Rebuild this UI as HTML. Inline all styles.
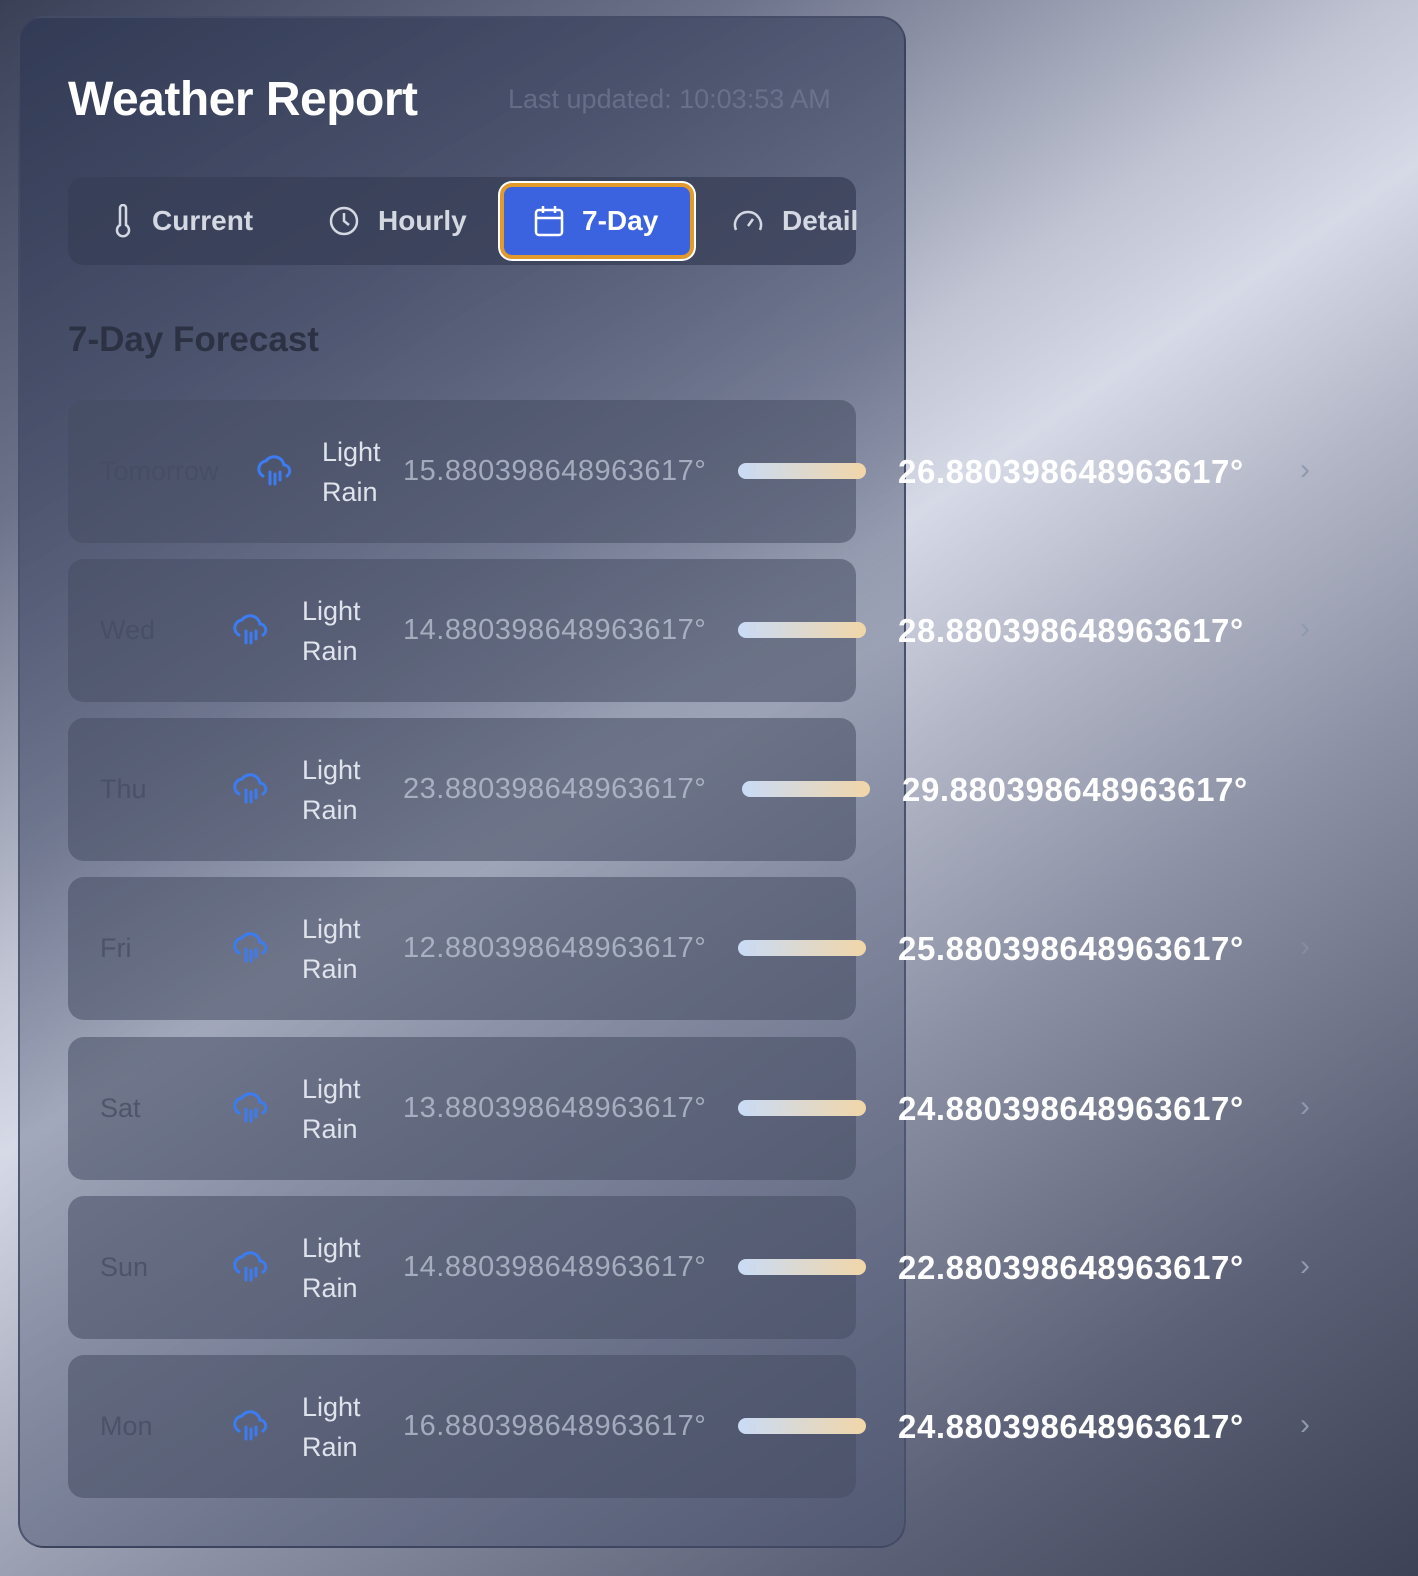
<!DOCTYPE html>
<html><head><meta charset="utf-8"><style>
*{margin:0;padding:0;box-sizing:border-box}
html,body{width:1418px;height:1576px;overflow:hidden}
body{font-family:"Liberation Sans",sans-serif;position:relative;
background:linear-gradient(145deg,#3a4056 0%,#6c728a 20%,#c0c4d3 38%,#d6dae7 45%,#b3b7c7 54%,#8c91a5 66%,#5c6177 84%,#3d4256 100%);}
.card{position:absolute;left:18px;top:16px;width:888px;height:1532px;border-radius:26px;border:2px solid rgba(60,68,95,.7);
background:linear-gradient(150deg,rgba(50,58,85,.95) 0%,rgba(90,98,125,.75) 40%,rgba(120,128,152,.55) 55%,rgba(80,88,115,.75) 100%)}
.title{position:absolute;left:68px;top:72px;font-size:48px;font-weight:bold;color:#fff;letter-spacing:-0.5px}
.upd{position:absolute;left:508px;top:84px;font-size:27px;color:rgba(120,130,155,.6)}
.tabs{position:absolute;left:68px;top:177px;width:788px;height:88px;border-radius:16px;background:rgba(55,62,85,.75)}
.tab{position:absolute;top:0;height:88px;display:flex;align-items:center;font-size:28px;font-weight:bold;color:#d4d8e2}
.tab svg{margin-right:18px}
.active{position:absolute;left:432px;top:6px;width:194px;height:76px;border-radius:12px;background:#3b63e0;border:4px solid #e39a2d;box-shadow:0 0 0 2px #fff}
.h2{position:absolute;left:68px;top:320px;font-size:35px;font-weight:bold;color:#2c3244}
.row{position:absolute;left:68px;width:788px;height:143px;border-radius:16px;background:rgba(70,76,98,.55)}
.t{position:absolute;white-space:nowrap}
.day{font-size:27px;color:rgba(70,76,96,.75)}
.cond{font-size:27px;color:#dfe3ec;line-height:40px}
.lo{font-size:29px;color:rgba(190,198,214,.75);letter-spacing:0.5px}
.hi{font-size:33px;font-weight:bold;color:#fff;letter-spacing:0.6px}
.bar{position:absolute;width:128px;height:16px;border-radius:8px;background:linear-gradient(90deg,#c9dbf6,#f1d6a8)}
.chev{position:absolute;font-size:30px;color:#8f9ab0}
</style></head><body>
<div class="card"></div>
<div class="title">Weather Report</div>
<div class="upd">Last updated: 10:03:53 AM</div>
<div class="tabs">
 <div class="active"></div>
 <div class="tab" style="left:44px"><svg width="22" height="34" viewBox="0 0 22 34" fill="none" stroke="#d4d8e2" stroke-width="2.5"><path d="M8 4a3 3 0 0 1 6 0v17a6 6 0 1 1-6 0z"/></svg>Current</div>
 <div class="tab" style="left:260px"><svg width="32" height="32" viewBox="0 0 32 32" fill="none" stroke="#d4d8e2" stroke-width="2.5"><circle cx="16" cy="16" r="13"/><path d="M16 8v8l5 4"/></svg>Hourly</div>
 <div class="tab" style="left:466px;color:#fff"><svg width="30" height="32" viewBox="0 0 30 32" fill="none" stroke="#fff" stroke-width="2.5"><rect x="2" y="5" width="26" height="25" rx="3"/><path d="M2 13h26M9 1v7M21 1v7"/></svg>7-Day</div>
 <div class="tab" style="left:664px"><svg width="32" height="32" viewBox="0 0 32 32" fill="none" stroke="#d4d8e2" stroke-width="2.5"><path d="M4 25A13 13 0 1 1 28 25"/><path d="M16 21l5-7"/></svg>Detail</div>
</div>
<div class="h2">7-Day Forecast</div>

<div class="row" style="top:400px"></div>
<div class="row" style="top:559px"></div>
<div class="row" style="top:718px"></div>
<div class="row" style="top:877px"></div>
<div class="row" style="top:1037px"></div>
<div class="row" style="top:1196px"></div>
<div class="row" style="top:1355px"></div>

<svg width="0" height="0" style="position:absolute"><defs><g id="rain" fill="none" stroke="#3d7cf0" stroke-width="3" stroke-linecap="round"><path d="M7 24A8 8 0 0 1 10 9a10 10 0 0 1 18 4 6 6 0 0 1 3 11"/><path d="M14 20v12M19 22v10M24 20v8"/></g></defs></svg>

<div class="t day" style="left:100px;top:456px">Tomorrow</div>
<svg class="t" style="left:256px;top:452px" width="36" height="38"><use href="#rain"/></svg>
<div class="t cond" style="left:322px;top:432px">Light<br>Rain</div>
<div class="t lo" style="left:403px;top:455px">15.880398648963617°</div>
<div class="bar" style="left:738px;top:463px"></div>
<div class="t hi" style="left:898px;top:453px">26.880398648963617°</div>
<div class="chev" style="left:1300px;top:453px">›</div>

<div class="t day" style="left:100px;top:615px">Wed</div>
<svg class="t" style="left:232px;top:611px" width="36" height="38"><use href="#rain"/></svg>
<div class="t cond" style="left:302px;top:591px">Light<br>Rain</div>
<div class="t lo" style="left:403px;top:614px">14.880398648963617°</div>
<div class="bar" style="left:738px;top:622px"></div>
<div class="t hi" style="left:898px;top:612px">28.880398648963617°</div>
<div class="chev" style="left:1300px;top:612px">›</div>

<div class="t day" style="left:100px;top:774px">Thu</div>
<svg class="t" style="left:232px;top:770px" width="36" height="38"><use href="#rain"/></svg>
<div class="t cond" style="left:302px;top:750px">Light<br>Rain</div>
<div class="t lo" style="left:403px;top:773px">23.880398648963617°</div>
<div class="bar" style="left:742px;top:781px"></div>
<div class="t hi" style="left:902px;top:771px">29.880398648963617°</div>

<div class="t day" style="left:100px;top:933px">Fri</div>
<svg class="t" style="left:232px;top:929px" width="36" height="38"><use href="#rain"/></svg>
<div class="t cond" style="left:302px;top:909px">Light<br>Rain</div>
<div class="t lo" style="left:403px;top:932px">12.880398648963617°</div>
<div class="bar" style="left:738px;top:940px"></div>
<div class="t hi" style="left:898px;top:930px">25.880398648963617°</div>
<div class="chev" style="left:1300px;top:930px;opacity:.5">›</div>

<div class="t day" style="left:100px;top:1093px">Sat</div>
<svg class="t" style="left:232px;top:1089px" width="36" height="38"><use href="#rain"/></svg>
<div class="t cond" style="left:302px;top:1069px">Light<br>Rain</div>
<div class="t lo" style="left:403px;top:1092px">13.880398648963617°</div>
<div class="bar" style="left:738px;top:1100px"></div>
<div class="t hi" style="left:898px;top:1090px">24.880398648963617°</div>
<div class="chev" style="left:1300px;top:1090px">›</div>

<div class="t day" style="left:100px;top:1252px">Sun</div>
<svg class="t" style="left:232px;top:1248px" width="36" height="38"><use href="#rain"/></svg>
<div class="t cond" style="left:302px;top:1228px">Light<br>Rain</div>
<div class="t lo" style="left:403px;top:1251px">14.880398648963617°</div>
<div class="bar" style="left:738px;top:1259px"></div>
<div class="t hi" style="left:898px;top:1249px">22.880398648963617°</div>
<div class="chev" style="left:1300px;top:1249px">›</div>

<div class="t day" style="left:100px;top:1411px">Mon</div>
<svg class="t" style="left:232px;top:1407px" width="36" height="38"><use href="#rain"/></svg>
<div class="t cond" style="left:302px;top:1387px">Light<br>Rain</div>
<div class="t lo" style="left:403px;top:1410px">16.880398648963617°</div>
<div class="bar" style="left:738px;top:1418px"></div>
<div class="t hi" style="left:898px;top:1408px">24.880398648963617°</div>
<div class="chev" style="left:1300px;top:1408px">›</div>
</body></html>
